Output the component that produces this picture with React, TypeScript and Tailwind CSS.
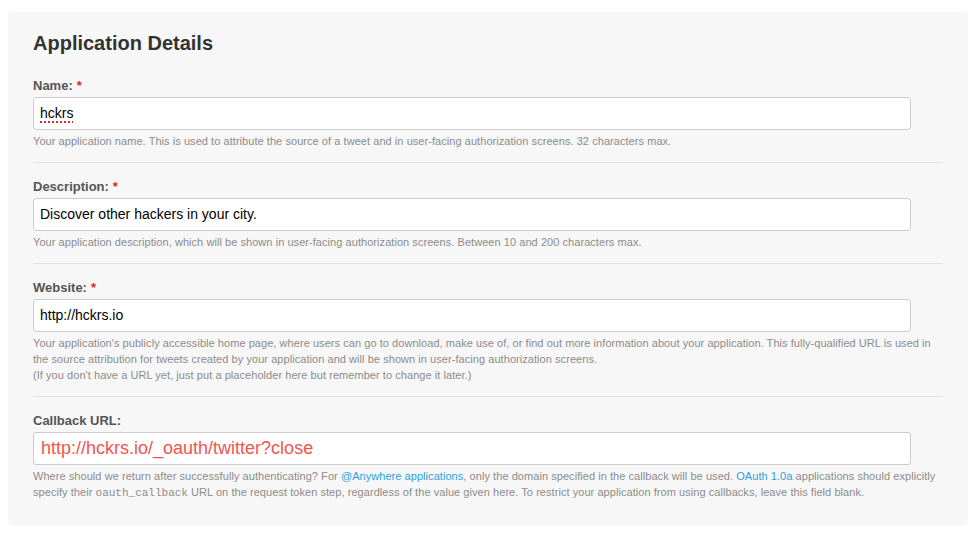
const fieldBox =
  "mt-[3px] flex h-[33px] w-[878px] items-center rounded-[3px] border border-[#cccccc] bg-white px-[6px] text-[14px] text-black";

function Label({ text, required }: { text: string; required?: boolean }) {
  return (
    <label className="block text-[13px] leading-4 font-bold text-[#555555]">
      {text}
      {required && <span className="ml-1 text-[#e0262b]">*</span>}
    </label>
  );
}

function Help({ children }: { children: React.ReactNode }) {
  return (
    <p className="mt-[3px] text-[11px] leading-4 tracking-[0.005em] text-[#8c8c8c]">{children}</p>
  );
}

function Divider() {
  return <div className="mt-[13px] mb-4 h-px w-full bg-[#e2e2e2]" />;
}

export default function App() {
  return (
    <div className="min-h-[536px] bg-white pt-3 font-['Liberation_Sans',Arial,sans-serif]">
      <div className="ml-2 w-[960px] rounded-[4px] bg-[#f7f7f7] px-[25px] pt-[19px] pb-[25px]">
        <h2 className="mb-[23px] text-[20px] leading-6 font-bold text-[#333333]">
          Application Details
        </h2>

        <Label text="Name:" required />
        <div className={fieldBox}>
          <span className="underline decoration-[#e0262b] decoration-dotted decoration-[1.5px] underline-offset-[3px]">
            hckrs
          </span>
        </div>
        <Help>
          Your application name. This is used to attribute the source of a tweet and in user-facing
          authorization screens. 32 characters max.
        </Help>
        <Divider />

        <Label text="Description:" required />
        <div className={fieldBox}>Discover other hackers in your city.</div>
        <Help>
          Your application description, which will be shown in user-facing authorization screens.
          Between 10 and 200 characters max.
        </Help>
        <Divider />

        <Label text="Website:" required />
        <div className={fieldBox}>http://hckrs.io</div>
        <Help>
          Your application's publicly accessible home page, where users can go to download, make use
          of, or find out more information about your application. This fully-qualified URL is used in
          <br />
          the source attribution for tweets created by your application and will be shown in
          user-facing authorization screens.
          <br />
          (If you don't have a URL yet, just put a placeholder here but remember to change it later.)
        </Help>
        <Divider />

        <Label text="Callback URL:" />
        <div className="mt-[3px] flex h-[33px] w-[878px] items-center rounded-[3px] border border-[#cccccc] bg-white px-[7px] text-[18px] text-[#f2544e]">
          http://hckrs.io/_oauth/twitter?close
        </div>
        <Help>
          Where should we return after successfully authenticating? For{" "}
          <span className="text-[#2aa3e0]">@Anywhere applications</span>, only the domain specified
          in the callback will be used. <span className="text-[#2aa3e0]">OAuth 1.0a</span>{" "}
          applications should explicitly
          <br />
          specify their{" "}
          <span className="font-['Liberation_Mono',monospace] text-[11px] tracking-normal">
            oauth_callback
          </span>{" "}
          URL on the request token step, regardless of the value given here. To restrict your
          application from using callbacks, leave this field blank.
        </Help>
      </div>
    </div>
  );
}
